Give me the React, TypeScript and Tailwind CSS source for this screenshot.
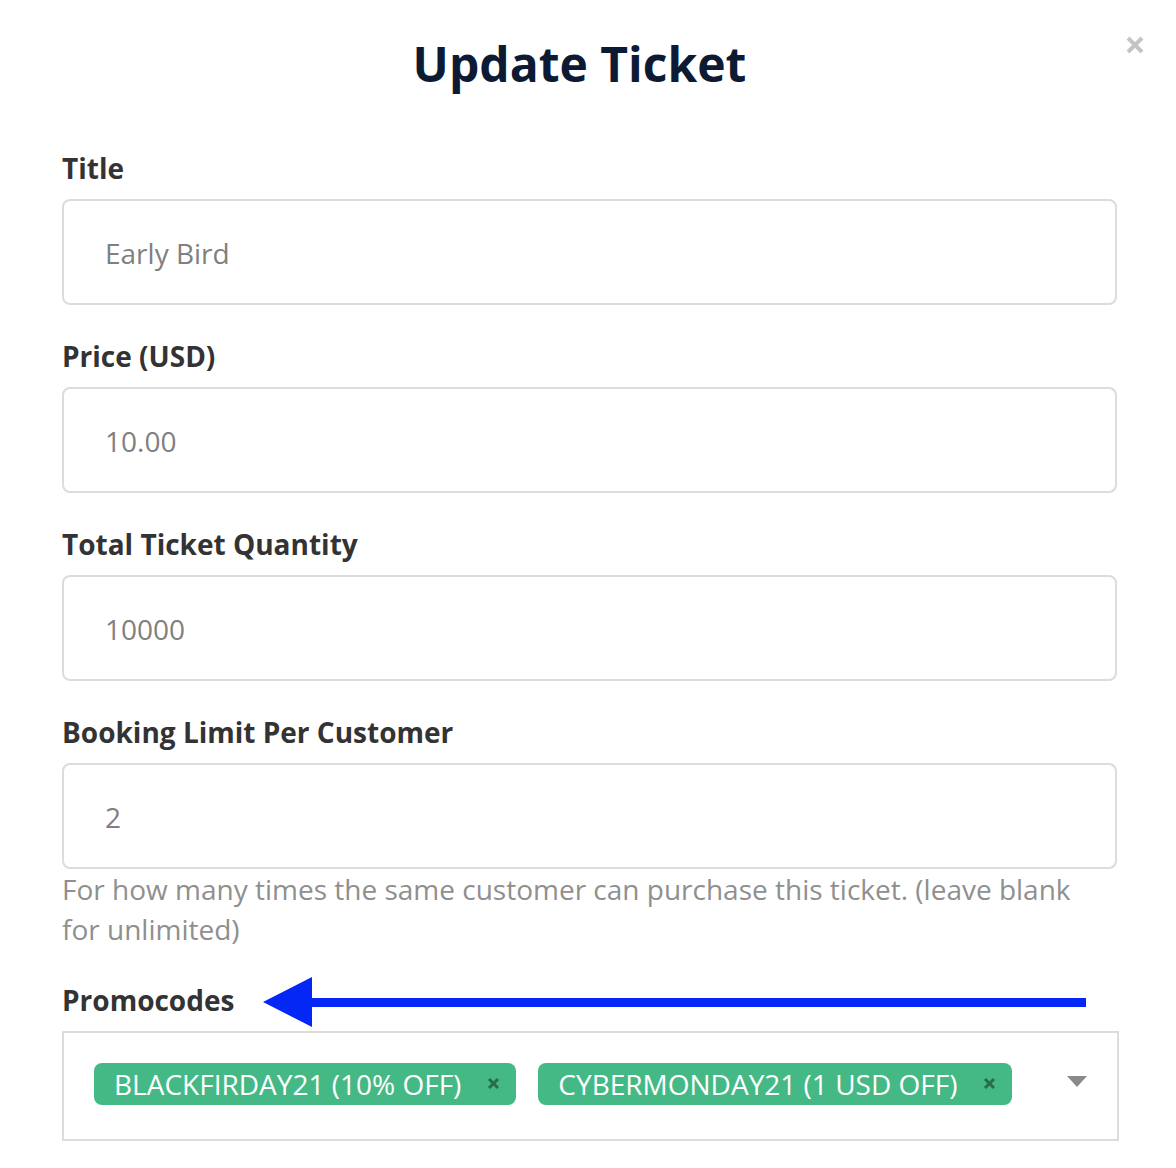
import React from "react";

const fields = [
  { label: "Title", value: "Early Bird" },
  { label: "Price (USD)", value: "10.00" },
  { label: "Total Ticket Quantity", value: "10000" },
  { label: "Booking Limit Per Customer", value: "2" },
];

const promos = ["BLACKFIRDAY21 (10% OFF)", "CYBERMONDAY21 (1 USD OFF)"];

const Field = ({ label, value }: { label: string; value: string }) => (
  <div>
    <label className="block text-[28px] font-bold leading-[36px] text-[#333]">{label}</label>
    <div className="mt-[13px] flex h-[106px] items-center rounded-[8px] border-2 border-[#dcdcdc] pl-[41px] pt-[2px] text-[28px] text-[#808080]">
      {value}
    </div>
  </div>
);

const App = () => {
  return (
    <div
      className="relative min-h-[1168px] w-full bg-white pl-[62px] pr-[59px] pt-[34px]"
      style={{ fontFamily: '"Open Sans", "Noto Sans", sans-serif' }}
    >
      <button className="absolute right-[31px] top-[35px] text-[#c4c4c4]">
        <svg width="20" height="20" viewBox="0 0 20 20">
          <path d="M3 3L17 17M17 3L3 17" stroke="currentColor" strokeWidth="4" />
        </svg>
      </button>

      <h1 className="pr-[20px] text-center text-[48px] font-bold leading-[60px] text-[#0c1b33]">
        Update Ticket
      </h1>

      <div className="mt-[56px] flex flex-col gap-[33px]">
        {fields.slice(0, 3).map((f) => (
          <Field key={f.label} {...f} />
        ))}
      </div>

      <div className="mt-[33px]">
        <Field {...fields[3]} />
        <p className="pr-[30px] text-[28px] leading-[40px] text-[#8f8f8f]">
          For how many times the same customer can purchase this ticket. (leave blank for unlimited)
        </p>
      </div>

      <div className="mt-[25px]">
        <div className="flex items-center">
          <label className="block text-[28px] font-bold leading-[36px] text-[#333]">Promocodes</label>
          <svg className="ml-[29px] overflow-visible" width="823" height="52" viewBox="0 0 823 52">
            <polygon points="0,28 49,3 49,53" fill="#0527f5" />
            <rect x="47" y="24" width="776" height="9" fill="#0527f5" />
          </svg>
        </div>
        <div className="mt-[5px] flex h-[110px] w-[1057px] items-center border-2 border-[#dcdcdc] pb-[5px] pl-[30px] pr-[30px]">
          <div className="flex flex-1 gap-[22px]">
            {promos.map((p) => (
              <span
                key={p}
                className="flex h-[42px] items-center rounded-[8px] bg-[#45b985] pl-[20px] pr-[16px] text-[28px] text-white"
              >
                {p}
                <svg className="ml-[26px]" width="13" height="13" viewBox="0 0 13 13">
                  <path d="M2 2L11 11M11 2L2 11" stroke="#2a6b4c" strokeWidth="3" />
                </svg>
              </span>
            ))}
          </div>
          <svg className="mb-[4px]" width="20" height="12" viewBox="0 0 20 12">
            <polygon points="0,0 20,0 10,11" fill="#8a8a8a" />
          </svg>
        </div>
      </div>
    </div>
  );
};

export default App;
